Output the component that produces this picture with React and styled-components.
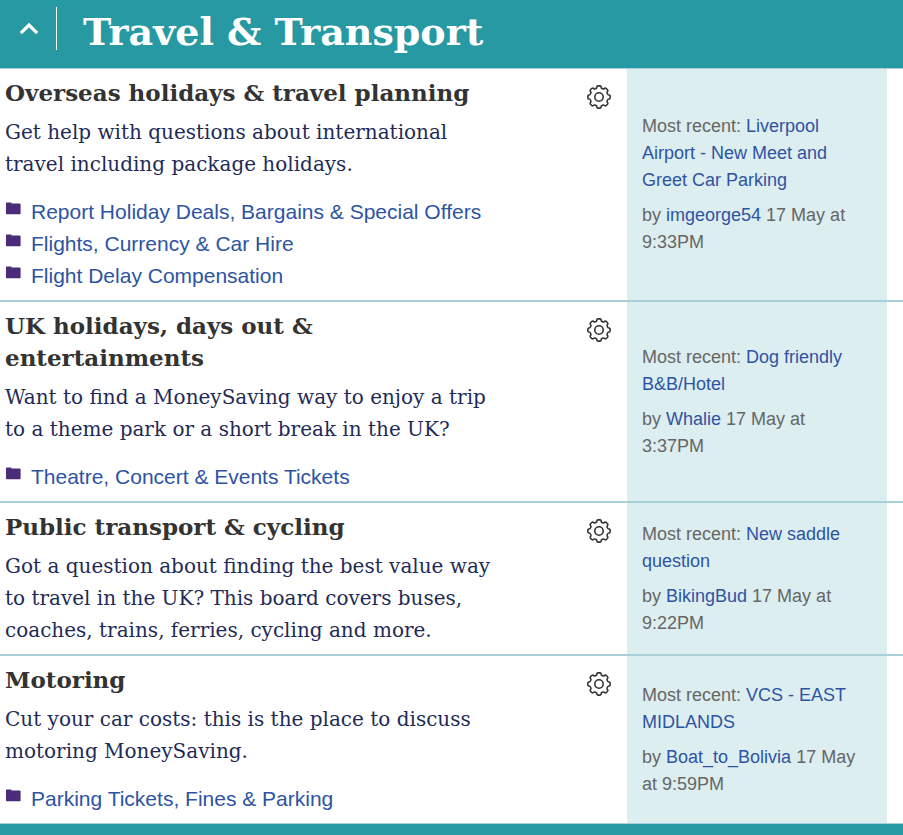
import styled, { createGlobalStyle } from "styled-components"

const GlobalStyle = createGlobalStyle`
    * {
        box-sizing: border-box;
    }
    body {
        margin: 0;
        background-color: #2799a3;
        font-family: "Liberation Sans", Arial, sans-serif;
    }
`

const slab = `"DejaVu Serif", Georgia, serif`

const Header = styled.header`
    display: flex;
    align-items: center;
    gap: 16px;
    height: 69px;
    padding: 0 16px 4px;
    background-color: #2799a3;
    border-bottom: 1px solid #a9d0d8;
`
const Toggle = styled.button`
    display: flex;
    align-items: center;
    height: 43px;
    padding: 0 16px 0 0;
    margin-bottom: 8px;
    border: none;
    border-right: 1px solid #fff;
    background: none;
    color: #fff;
    cursor: pointer;
`
const Title = styled.h1`
    margin: 0;
    padding-left: 10px;
    font-family: ${slab};
    font-size: 38px;
    line-height: 48px;
    font-weight: 700;
    color: #fff;
`
const Board = styled.section`
    display: grid;
    grid-template-columns: minmax(0, 1fr) 260px;
    padding-right: 16px;
    background-color: #fff;
    border-bottom: ${props => (props.$last ? "1px" : "2px")} solid #a9d0d8;
`
const Main = styled.div`
    display: flex;
    align-items: flex-start;
    justify-content: space-between;
    gap: 84px;
    padding: 8px 16px 8px 5px;
`
const Name = styled.h2`
    margin: 0 0 7px;
    font-family: ${slab};
    font-size: 23px;
    line-height: 32px;
    font-weight: 700;
    color: #333;
`
const Descr = styled.p`
    margin: 0;
    font-family: ${slab};
    font-size: 20px;
    line-height: 32px;
    color: #1f2b57;
`
const List = styled.ul`
    margin: 16px 0 0;
    padding: 0;
    list-style: none;
`
const ListItem = styled.li`
    display: flex;
    align-items: flex-start;
    gap: 10px;
    font-size: 21px;
    line-height: 32px;
    svg {
        flex: none;
        margin-top: 6px;
    }
`
const Link = styled.a`
    color: #2d54a3;
    text-decoration: none;
    &:hover {
        text-decoration: underline;
    }
`
const Options = styled.button`
    flex: none;
    display: flex;
    margin-top: 8px;
    padding: 0;
    border: none;
    background: none;
    color: #333;
    cursor: pointer;
`
const Recent = styled.aside`
    display: flex;
    flex-direction: column;
    justify-content: center;
    gap: 8px;
    padding: 0 15px;
    background-color: #ddeef1;
    font-size: 18px;
    line-height: 27px;
    color: #666;
    p {
        margin: 0;
    }
`
const Footer = styled.footer`
    height: 11px;
    background-color: #2799a3;
`

// eight rounded teeth, one every 45 degrees
const point = (radius, deg) => {
  const a = ((deg - 90) * Math.PI) / 180
  return `${(12 + radius * Math.cos(a)).toFixed(2)} ${(12 + radius * Math.sin(a)).toFixed(2)}`
}
const gearPath = [0, 45, 90, 135, 180, 225, 270, 315]
  .map((t, i) =>
    `${i ? "L" : "M"}${point(9.4, t - 14)} Q${point(11.2, t - 12)} ${point(11.2, t - 6)} L${point(11.2, t + 6)} Q${point(11.2, t + 12)} ${point(9.4, t + 14)} Q${point(8.6, t + 22.5)} ${point(9.4, t + 31)}`)
  .join(" ") + "Z"

const Gear = () => (
  <svg width="24" height="24" viewBox="0 0 24 24" fill="none" stroke="currentColor" strokeWidth="1.6" strokeLinejoin="round" aria-hidden="true">
    <path d={gearPath} />
    <circle cx="12" cy="12" r="4.2" />
  </svg>
)

const Folder = () => (
  <svg width="16" height="13" viewBox="0 0 16 13" fill="#4a2c78" aria-hidden="true">
    <path d="M1 1Q1 .4 1.6 .4H6L6.8 1.4H14.6Q15.6 1.4 15.6 2.4V11.4Q15.6 12.2 14.8 12.2H1.8Q1 12.2 1 11.4Z" />
  </svg>
)

const Chevron = () => (
  <svg width="24" height="24" viewBox="0 0 24 24" fill="none" stroke="currentColor" strokeWidth="3.2" aria-hidden="true">
    <path d="M4.8 17.2L13 9L21.2 17.2" />
  </svg>
)

const boards = [
  {
    name: "Overseas holidays & travel planning",
    descr: "Get help with questions about international travel including package holidays.",
    links: ["Report Holiday Deals, Bargains & Special Offers", "Flights, Currency & Car Hire", "Flight Delay Compensation"],
    post: "Liverpool Airport - New Meet and Greet Car Parking",
    user: "imgeorge54",
    date: "17 May at 9:33PM",
  },
  {
    name: "UK holidays, days out & entertainments",
    descr: "Want to find a MoneySaving way to enjoy a trip to a theme park or a short break in the UK?",
    links: ["Theatre, Concert & Events Tickets"],
    post: "Dog friendly B&B/Hotel",
    user: "Whalie",
    date: "17 May at 3:37PM",
  },
  {
    name: "Public transport & cycling",
    descr: "Got a question about finding the best value way to travel in the UK? This board covers buses, coaches, trains, ferries, cycling and more.",
    links: [],
    post: "New saddle question",
    user: "BikingBud",
    date: "17 May at 9:22PM",
  },
  {
    name: "Motoring",
    descr: "Cut your car costs: this is the place to discuss motoring MoneySaving.",
    links: ["Parking Tickets, Fines & Parking"],
    post: "VCS - EAST MIDLANDS",
    user: "Boat_to_Bolivia",
    date: "17 May at 9:59PM",
  },
]

const App = () => {
  return (
    <>
      <GlobalStyle />
      <Header>
        <Toggle aria-label="Collapse category"><Chevron /></Toggle>
        <Title>Travel &amp; Transport</Title>
      </Header>
      <main>
        {boards.map((board, i) => (
          <Board key={board.name} $last={i === boards.length - 1}>
            <Main>
              <div>
                <Name>{board.name}</Name>
                <Descr>{board.descr}</Descr>
                {board.links.length > 0 && (
                  <List>
                    {board.links.map(link => (
                      <ListItem key={link}><Folder /><Link href="#">{link}</Link></ListItem>
                    ))}
                  </List>
                )}
              </div>
              <Options aria-label={`${board.name} options`}><Gear /></Options>
            </Main>
            <Recent>
              <p>Most recent: <Link href="#">{board.post}</Link></p>
              <p>by <Link href="#">{board.user}</Link> {board.date}</p>
            </Recent>
          </Board>
        ))}
      </main>
      <Footer />
    </>
  )
}

export default App
